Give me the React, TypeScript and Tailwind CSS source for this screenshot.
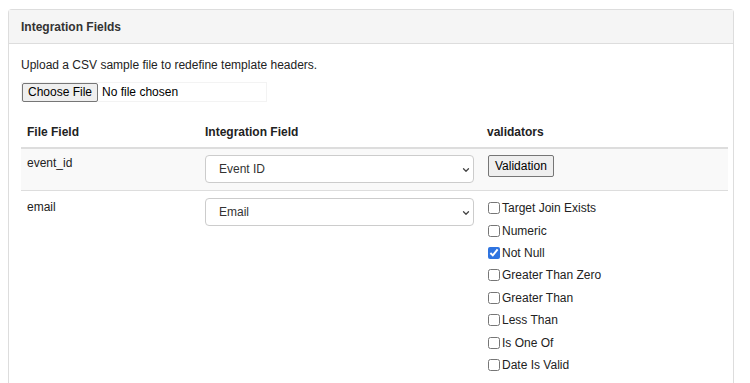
import { ChevronDown } from 'lucide-react'

const VALIDATORS = [
  { label: 'Target Join Exists', checked: false },
  { label: 'Numeric',            checked: false },
  { label: 'Not Null',           checked: true },
  { label: 'Greater Than Zero',  checked: false },
  { label: 'Greater Than',       checked: false },
  { label: 'Less Than',          checked: false },
  { label: 'Is One Of',          checked: false },
  { label: 'Date Is Valid',      checked: false },
]

function FieldSelect({ value }: { value: string }) {
  return (
    <div className="relative w-[269px] h-[28px]">
      <select defaultValue={value}
        className="appearance-none w-full h-full border border-[#ccc] rounded-[4px] bg-white pl-[13px] pr-8 text-[12px] text-[#333] outline-none">
        <option>{value}</option>
      </select>
      <ChevronDown size={10} strokeWidth={3} className="absolute right-[3px] top-[10px] text-[#444] pointer-events-none" />
    </div>
  )
}

export default function App() {
  return (
    <div className="bg-white min-h-[383px] px-2 pt-[9px] text-[12px] text-[#222] font-['Liberation_Sans',Arial,sans-serif]">
      <div className="border border-b-0 border-[#ddd] rounded-t-[4px] w-[726px] min-h-[374px]">
        <div className="bg-[#f5f5f5] border-b border-[#ddd] h-[34px] flex items-center px-3 font-bold text-[#333]">
          Integration Fields
        </div>

        <div className="px-3 pt-[12px]">
          <p className="leading-[18px] mb-[8px]">Upload a CSV sample file to redefine template headers.</p>
          <div className="flex items-center w-[246px] h-[20px] border border-[#f3f3f3]">
            <button type="button"
              className="h-[19px] px-[5px] bg-[#efefef] border border-[#767676] rounded-[2px] text-[12px] leading-none text-black">
              Choose File
            </button>
            <span className="ml-[4px] text-black">No file chosen</span>
          </div>

          <table className="mt-[15px] w-[707px] border-collapse">
            <thead>
              <tr className="border-b-2 border-[#ddd]">
                <th className="w-[178px] text-left font-bold px-[6px] pt-[6px] pb-[6px] leading-[18px]">File Field</th>
                <th className="w-[282px] text-left font-bold px-[6px] pt-[6px] pb-[6px] leading-[18px]">Integration Field</th>
                <th className="text-left font-bold px-[6px] pt-[6px] pb-[6px] leading-[18px]">validators</th>
              </tr>
            </thead>
            <tbody>
              <tr className="bg-[#f9f9f9] border-b border-[#ddd]">
                <td className="align-top px-[6px] pt-[5px] leading-[18px]">event_id</td>
                <td className="align-top px-[6px] pt-[6px] pb-[7px]"><FieldSelect value="Event ID" /></td>
                <td className="align-top pl-[7px] pr-[6px] pt-[6px]">
                  <button type="button"
                    className="h-[22px] px-[6px] bg-[#efefef] border border-[#767676] rounded-[2px] text-[12px] text-black leading-none">
                    Validation
                  </button>
                </td>
              </tr>
              <tr>
                <td className="align-top px-[6px] pt-[7px] leading-[18px]">email</td>
                <td className="align-top px-[6px] pt-[7px]"><FieldSelect value="Email" /></td>
                <td className="align-top pl-[7px] pr-[6px] pt-[6px]">
                  {VALIDATORS.map(v => (
                    <label key={v.label} className="flex items-center h-[22.4px] gap-[2px]">
                      <input type="checkbox" defaultChecked={v.checked}
                        className="w-[12px] h-[12px] m-0 accent-[#2f74e0]" />
                      <span className="leading-[18px]">{v.label}</span>
                    </label>
                  ))}
                </td>
              </tr>
            </tbody>
          </table>
        </div>
      </div>
    </div>
  )
}
